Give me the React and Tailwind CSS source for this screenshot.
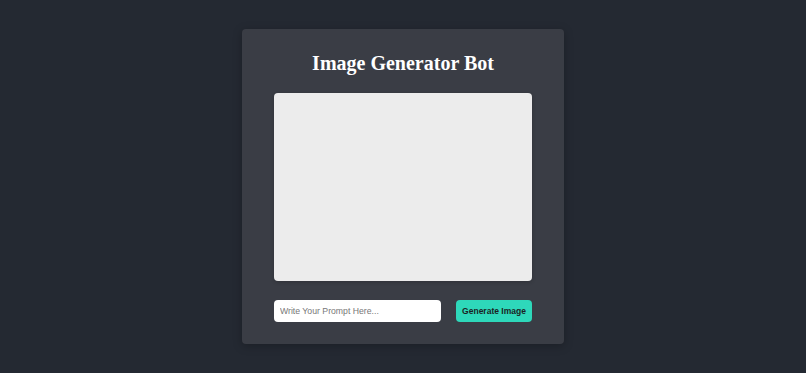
export default function App() {
  return (
    <div className="min-h-screen w-full bg-[#242932] flex justify-center pt-[29px]">
      <div className="w-[322px] h-[315px] bg-[#3a3d45] rounded-[4px] shadow-[0_2px_10px_rgba(0,0,0,0.25)] px-[32px] pt-[22px] pb-[22px] flex flex-col">
        <h1 className="text-center text-white font-bold text-[20px] leading-[24px] font-['Liberation_Serif','Times_New_Roman',serif]">
          Image Generator Bot
        </h1>
        <div className="mt-[18px] w-[258px] h-[188px] bg-[#ececec] rounded-[4px] shadow-[0_1px_4px_rgba(0,0,0,0.2)]"></div>
        <div className="mt-[19px] flex justify-between items-center">
          <input
            type="text"
            placeholder="Write Your Prompt Here..."
            className="w-[167px] h-[22px] bg-white rounded-[4px] px-[6px] text-[8.7px] text-[#333] placeholder:text-[#777] outline-none font-['Liberation_Sans',Arial,sans-serif]"
          />
          <button className="w-[76px] h-[22px] bg-[#2ed8ba] rounded-[4px] text-[8.5px] font-bold text-[#1b1f24] font-['Liberation_Sans',Arial,sans-serif]">
            Generate Image
          </button>
        </div>
      </div>
    </div>
  );
}
